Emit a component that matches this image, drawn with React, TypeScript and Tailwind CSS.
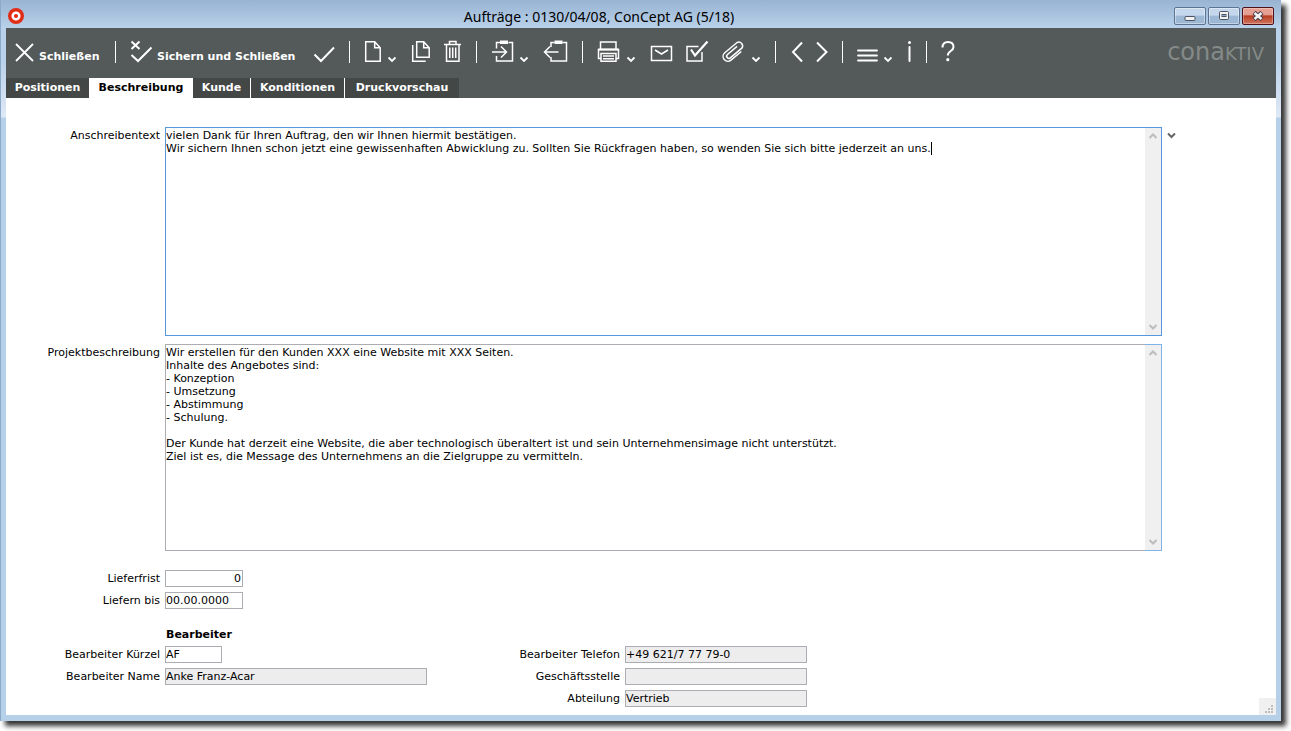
import type { ReactNode } from "react";

const Icon = ({ className, children }: { className: string; children: ReactNode }) => (
  <svg
    className={`h-6 shrink-0 overflow-visible ${className}`}
    fill="none"
    stroke="currentColor"
    strokeWidth="1.5"
    aria-hidden="true"
  >
    {children}
  </svg>
);

const ToolButton = ({ label, children }: { label: string; children: ReactNode }) => (
  <button type="button" aria-label={label} className="flex shrink-0 items-end gap-[7px]">
    {children}
  </button>
);

const DropArrow = () => (
  <Icon className="w-2">
    <path d="M0.5 17.5l3.5 3.5 3.5-3.5" strokeWidth="1.8" />
  </Icon>
);

const Divider = () => <span className="mb-px h-[22px] w-px shrink-0 bg-white" />;

const Group = ({ children }: { children: ReactNode }) => (
  <div className="flex shrink-0 items-end gap-[15px] px-[15px]">{children}</div>
);

const Toolbar = () => (
  <div className="flex h-[50px] items-start justify-between pt-3 pr-3 text-white">
    <div className="flex items-end text-[11px] leading-[13px] font-bold whitespace-nowrap">
      <button type="button" className="flex w-[109px] shrink-0 items-end gap-[6px] pl-[9px] text-left">
        <Icon className="w-[18px]">
          <path d="M1 4l17 17M18 4L1 21" strokeWidth="1.8" />
        </Icon>
        <span className="pb-px">Schließen</span>
      </button>
      <Divider />
      <div className="flex w-[233px] shrink-0 items-end justify-between px-[15px]">
        <button type="button" className="flex items-end gap-[6px]">
          <Icon className="w-5">
            <path d="M0.5 1.5l8 7.5M8.5 1.5L0.5 9M0.5 15l6.5 6L20.5 7.500" strokeWidth="2" />
          </Icon>
          <span className="pb-px">Sichern und Schließen</span>
        </button>
        <ToolButton label="Sichern">
          <Icon className="w-5">
            <path d="M0.5 14.5l6.5 6.5L20 7.5" strokeWidth="2" />
          </Icon>
        </ToolButton>
      </div>
      <Divider />
      <Group>
        <ToolButton label="Neu">
          <Icon className="w-4">
            <path d="M0.7 1.7h9l5.5 6v13.5H0.7zM9.7 1.7v6h5.5" />
          </Icon>
          <DropArrow />
        </ToolButton>
        <ToolButton label="Duplizieren">
          <Icon className="w-[18px]">
            <path d="M1.7 5v16.2h13M5.7 1.7h7l5.5 6v9.5H5.7zM12.7 1.7v6h5.5" />
          </Icon>
        </ToolButton>
        <ToolButton label="Löschen">
          <Icon className="w-[17px]">
            <path d="M0 4.5h17M5.5 4.5v-3h6.5v3M2.5 4.5v16.7h12.5V4.5M5.8 7.5v10.500M8.7 7.5v10.5M11.7 7.5v10.5" />
          </Icon>
        </ToolButton>
      </Group>
      <Divider />
      <Group>
        <ToolButton label="Importieren">
          <Icon className="w-[21px]">
            <path d="M4.500 8.500v-6h3.500M16.500 2.500h4v18.500h-16v-5M0 12h14M9 6.500l5.500 5.500-5.500 5.500" />
            <path d="M8 0.500h8v3.500H8z" fill="currentColor" stroke="none" />
          </Icon>
          <DropArrow />
        </ToolButton>
        <ToolButton label="Exportieren">
          <Icon className="w-6">
            <path d="M8 7V2.500h3.500M19.500 2.500h4v18.500H8v-4M1.500 12h14M7 6.500L1.500 12 7 17.500" />
            <path d="M11.500 0.500h8v3.500h-8z" fill="currentColor" stroke="none" />
          </Icon>
        </ToolButton>
      </Group>
      <Divider />
      <Group>
        <ToolButton label="Drucken">
          <Icon className="w-[22px]">
            <path d="M2.500 9V2h15.500v7M3 18.500H0.500v-9h20v9h-2.500M3 13.500h15v7.700H3zM5 16h11M5 18.700h11" />
            <path d="M0.500 9.500h20" strokeWidth="2" />
          </Icon>
          <DropArrow />
        </ToolButton>
        <ToolButton label="E-Mail">
          <Icon className="w-[21px]">
            <path d="M1.500 6.500h20v14h-20zM5 10l6.500 4 6.500-4" />
          </Icon>
        </ToolButton>
        <ToolButton label="Aufgabe">
          <Icon className="w-[22px]">
            <path d="M12.500 6.500h-11.500v14.500h15v-9" />
            <path d="M5 9.500l4 6L21.500 1.500" strokeWidth="2.200" />
          </Icon>
        </ToolButton>
        <ToolButton label="Anhang">
          <Icon className="w-[22px]">
            <path
              d="M5-6V7.500a4.800 4.800 0 0 1-9.600 0V-8.500a3.800 3.800 0 0 1 7.400 0V6.500a2.200 2.200 0 0 1-4.400 0V-6"
              transform="translate(10.500 11.500) rotate(50)"
            />
          </Icon>
          <DropArrow />
        </ToolButton>
      </Group>
      <Divider />
      <Group>
        <ToolButton label="Vorheriger">
          <Icon className="w-[11px]">
            <path d="M11 2.500L2 12l9 9.500" strokeWidth="2" />
          </Icon>
        </ToolButton>
        <ToolButton label="Nächster">
          <Icon className="w-[10px]">
            <path d="M0 2.500L9.500 12 0 21.500" strokeWidth="2" />
          </Icon>
        </ToolButton>
      </Group>
      <Divider />
      <Group>
        <ToolButton label="Menü">
          <Icon className="w-[19px]">
            <path d="M0 10.500h19M0 15.500h19M0 20.500h19" strokeWidth="1.800" strokeLinecap="round" />
          </Icon>
          <DropArrow />
        </ToolButton>
        <ToolButton label="Info">
          <Icon className="w-1">
            <path d="M2.500 7v14" strokeWidth="2" strokeLinecap="round" />
            <circle cx="2.500" cy="2.500" r="1.500" fill="currentColor" stroke="none" />
          </Icon>
        </ToolButton>
      </Group>
      <Divider />
      <Group>
        <ToolButton label="Hilfe">
          <Icon className="w-3">
            <path
              d="M0.500 7.500C0.500 4 2.500 2 6 2s5.500 2 5.500 5c0 4.500-5.700 3.500-5.700 8.500"
              strokeWidth="2"
            />
            <circle cx="5.800" cy="19.700" r="1.600" fill="currentColor" stroke="none" />
          </Icon>
        </ToolButton>
      </Group>
    </div>
    <div className="flex items-baseline text-2xl leading-6 text-[#858a89]">
      cona<span className="text-lg leading-6">KTIV</span>
    </div>
  </div>
);

const tabs = [
  { label: "Positionen", style: "w-[83px] bg-[#434847] text-white" },
  { label: "Beschreibung", style: "w-[104px] bg-white text-black" },
  { label: "Kunde", style: "w-[58px] border-r border-white bg-[#434847] text-white" },
  { label: "Konditionen", style: "w-[94px] border-r border-white bg-[#434847] text-white" },
  { label: "Druckvorschau", style: "w-[114px] bg-[#434847] text-white" },
];

const Tabs = () => (
  <nav className="flex h-5 text-[11px] font-bold whitespace-nowrap">
    {tabs.map((tab) => (
      <button key={tab.label} type="button" className={`flex items-center justify-center ${tab.style}`}>
        {tab.label}
      </button>
    ))}
  </nav>
);

const ScrollTrack = ({ className = "" }: { className?: string }) => (
  <div className={`flex w-4 shrink-0 flex-col items-center justify-between bg-[#f0f0f0] py-[5px] ${className}`}>
    <svg width="8" height="6" fill="none" stroke="#bdbdbd" strokeWidth="2" aria-hidden="true">
      <path d="M0.500 5L4 1.500 7.500 5" />
    </svg>
    <svg width="8" height="6" fill="none" stroke="#bdbdbd" strokeWidth="2" aria-hidden="true">
      <path d="M0.500 1L4 4.500 7.500 1" />
    </svg>
  </div>
);

type FieldProps = {
  id: string;
  label: string;
  value: string;
  labelWidth?: string;
  width: string;
  readOnly?: boolean;
};

const Field = ({ id, label, value, labelWidth = "w-[154px]", width, readOnly }: FieldProps) => (
  <div className="flex items-center gap-[5px]">
    <label htmlFor={id} className={`text-right ${labelWidth}`}>
      {label}
    </label>
    <input
      id={id}
      defaultValue={value}
      readOnly={readOnly}
      className={`h-[17px] border border-[#abadb3] pr-px outline-none ${readOnly ? "bg-[#ededed]" : "bg-white"} ${width}`}
    />
  </div>
);

const letterText = `vielen Dank für Ihren Auftrag, den wir Ihnen hiermit bestätigen.
Wir sichern Ihnen schon jetzt eine gewissenhaften Abwicklung zu. Sollten Sie Rückfragen haben, so wenden Sie sich bitte jederzeit an uns.`;

const projectText = `Wir erstellen für den Kunden XXX eine Website mit XXX Seiten.
Inhalte des Angebotes sind:
- Konzeption
- Umsetzung
- Abstimmung
- Schulung.

Der Kunde hat derzeit eine Website, die aber technologisch überaltert ist und sein Unternehmensimage nicht unterstützt.
Ziel ist es, die Message des Unternehmens an die Zielgruppe zu vermitteln.`;

const DescriptionForm = () => (
  <form className="flex flex-col gap-[19px] pt-[29px] text-[11px] leading-[13px] text-black">
    <div className="flex flex-col gap-2 pr-[100px]">
      <div className="flex gap-[5px]">
        <label htmlFor="letter" className="w-[154px] shrink-0 pt-[2px] text-right">
          Anschreibentext
        </label>
        <div className="relative flex h-[209px] flex-1 border border-[#5797dc]">
          <textarea
            id="letter"
            defaultValue={letterText}
            className="flex-1 resize-none overflow-hidden pt-px caret-transparent outline-none"
          />
          <span className="absolute top-[14px] left-[765px] h-[13px] w-px bg-black" />
          <ScrollTrack />
        </div>
        <button type="button" aria-label="Textbausteine" className="h-4 w-[9px]">
          <svg width="9" height="16" fill="none" stroke="#666" strokeWidth="2" aria-hidden="true">
            <path d="M1 6.500l3.500 3.500L8 6.500" />
          </svg>
        </button>
      </div>
      <div className="flex gap-[5px] pr-[14px]">
        <label htmlFor="project" className="w-[154px] shrink-0 pt-[2px] text-right">
          Projektbeschreibung
        </label>
        <div className="flex h-[207px] flex-1">
          <textarea
            id="project"
            defaultValue={projectText}
            className="flex-1 resize-none overflow-hidden border border-r-0 border-[#abadb3] pt-px outline-none"
          />
          <ScrollTrack className="box-content border-y border-r border-[#7eb4ea]" />
        </div>
      </div>
    </div>

    <div className="flex flex-col gap-[5px]">
      <Field id="term" label="Lieferfrist" value="0" width="w-[78px] text-right" />
      <Field id="due" label="Liefern bis" value="00.00.0000" width="w-[78px]" />
    </div>

    <div className="flex flex-col gap-[5px]">
      <h2 className="pl-[160px] font-bold">Bearbeiter</h2>
      <div className="flex">
        <div className="flex w-[421px] flex-col gap-[5px]">
          <Field id="code" label="Bearbeiter Kürzel" value="AF" width="w-[57px]" />
          <Field id="name" label="Bearbeiter Name" value="Anke Franz-Acar" width="w-[262px]" readOnly />
        </div>
        <div className="flex flex-col gap-[5px]">
          <Field id="phone" label="Bearbeiter Telefon" value="+49 621/7 77 79-0" labelWidth="w-[193px]" width="w-[182px]" readOnly />
          <Field id="office" label="Geschäftsstelle" value="" labelWidth="w-[193px]" width="w-[182px]" readOnly />
          <Field id="department" label="Abteilung" value="Vertrieb" labelWidth="w-[193px]" width="w-[182px]" readOnly />
        </div>
      </div>
    </div>
  </form>
);

const controlStyle =
  "flex h-[18px] w-8 items-center justify-center rounded-[2px] border border-[#5d7394] bg-linear-to-b from-[#c5d7ec] from-45% to-[#9db8d5] to-50% inset-ring inset-ring-white/40";

const TitleBar = () => (
  <header className="flex h-7 items-center px-[2px] pt-1">
    <svg width="16" height="16" aria-hidden="true">
      <circle cx="8" cy="8" r="8" fill="#e22d16" />
      <circle cx="8" cy="8" r="3.300" fill="none" stroke="#fff" strokeWidth="2.500" />
    </svg>
    <h1 className="flex-1 text-center font-['Noto_Sans','Open_Sans',sans-serif] text-[14px] text-black">
      Aufträge : 0130/04/08, ConCept AG (5/18)
    </h1>
    <div className="flex gap-[2px]">
      <button type="button" aria-label="Minimieren" className={controlStyle}>
        <svg width="12" height="12" aria-hidden="true">
          <rect x="1" y="6.500" width="10" height="4" rx="1" fill="#f2f2f2" stroke="#4a5361" />
        </svg>
      </button>
      <button type="button" aria-label="Maximieren" className={controlStyle}>
        <svg width="12" height="12" aria-hidden="true">
          <rect x="1.500" y="1.500" width="9" height="8" rx="1" fill="#f2f2f2" stroke="#4a5361" />
          <rect x="4" y="4.500" width="4" height="2" fill="#8ba6c6" stroke="#4a5361" />
        </svg>
      </button>
      <button
        type="button"
        aria-label="Fenster schließen"
        className="flex h-[18px] w-8 items-center justify-center rounded-[2px] border border-[#4d1019] bg-linear-to-b from-[#e5a093] from-40% via-[#b93d20] via-50% to-[#d0745e] inset-ring inset-ring-white/30"
      >
        <svg width="12" height="10" aria-hidden="true">
          <path d="M2 1.500l8 7M10 1.500l-8 7" stroke="#4a4150" strokeWidth="4.500" />
          <path d="M2.500 2l7 6M9.500 2l-7 6" stroke="#f4f4f4" strokeWidth="2.500" />
        </svg>
      </button>
    </div>
  </header>
);

export default function App() {
  return (
    <div className="flex min-h-screen bg-white pr-[10px] pb-[10px] font-['DejaVu_Sans',Verdana,sans-serif]">
      <div className="flex flex-1 flex-col border-l border-[#8ba9c9] bg-[linear-gradient(#98b4d2_0px,#b9d1ea_28px,#b9d1ea_60px,#dfe9f6_117px,#b7d0e9_118px)] pr-[5px] pb-[6px] pl-[5px] shadow-[5px_5px_5px_rgba(0,0,0,0.8)]">
        <TitleBar />
        <div className="bg-[#535a59]">
          <Toolbar />
          <Tabs />
        </div>
        <main className="relative flex-1 bg-white pb-2">
          <DescriptionForm />
          <svg className="absolute right-0 bottom-0 bg-[#f0f0f0]" width="17" height="17" fill="#bdbdbd" aria-hidden="true">
            <path d="M12 7h2v2h-2zM9 10h2v2H9zM12 10h2v2h-2zM6 13h2v2H6zM9 13h2v2H9zM12 13h2v2h-2z" />
          </svg>
        </main>
      </div>
    </div>
  );
}
